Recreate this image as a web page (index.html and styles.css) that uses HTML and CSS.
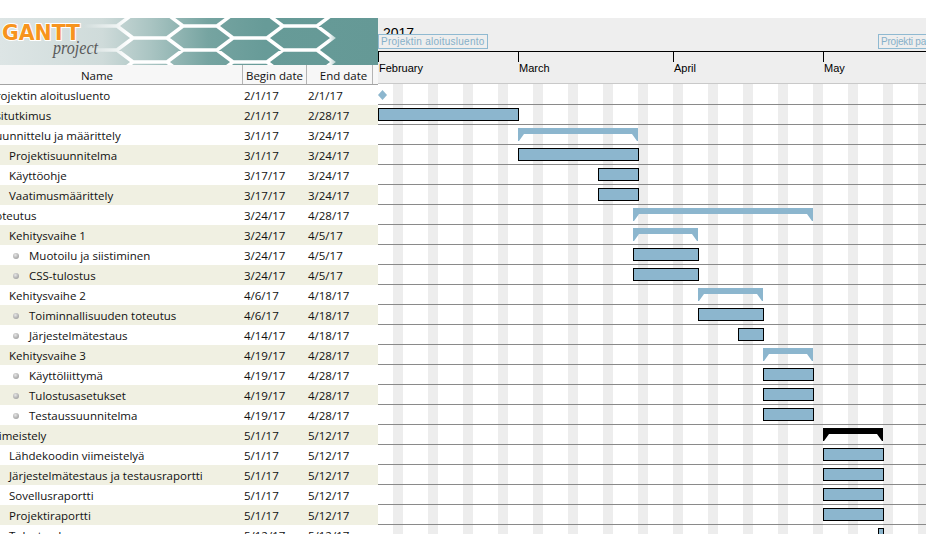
FILE: index.html
```html
<!DOCTYPE html>
<html>
<head>
<meta charset="utf-8">
<title>GanttProject</title>
<link rel="stylesheet" href="styles.css">
</head>
<body>
<div class="topgap"></div>
<div class="main">
  <div class="tree">
    <div class="banner">
      <svg width="378" height="47" viewBox="0 0 378 47">
        <defs>
          <linearGradient id="bg" x1="0" y1="0" x2="1" y2="0">
            <stop offset="0" stop-color="#dde5e5"/>
            <stop offset="0.27" stop-color="#cfdbda"/>
            <stop offset="0.40" stop-color="#a9c4c2"/>
            <stop offset="0.55" stop-color="#76a4a1"/>
            <stop offset="0.70" stop-color="#679b98"/>
            <stop offset="1" stop-color="#659996"/>
          </linearGradient>
          <linearGradient id="fade" x1="0" y1="0" x2="378" y2="0" gradientUnits="userSpaceOnUse">
            <stop offset="0.22" stop-color="#fff" stop-opacity="0"/>
            <stop offset="0.34" stop-color="#fff" stop-opacity="1"/>
            <stop offset="0.87" stop-color="#fff" stop-opacity="1"/>
            <stop offset="0.91" stop-color="#fff" stop-opacity="0"/>
          </linearGradient>
          <mask id="hexmask">
            <rect x="0" y="0" width="378" height="47" fill="url(#fade)"/>
          </mask>
        </defs>
        <rect x="0" y="0" width="378" height="47" fill="url(#bg)"/>
        <g mask="url(#hexmask)" fill="none" stroke="#ffffff" stroke-width="3.5" stroke-linejoin="miter">
          <path d="M67 20l16-12h34l16 12-16 12h-34z M67 44l16-12h34l16 12-16 12h-34z M67 -4l16-12h34l16 12-16 12h-34z
                   M117 8l16-12h34l16 12-16 12h-34z M117 32l16-12h34l16 12-16 12h-34z M117 56l16-12h34l16 12-16 12h-34z
                   M167 20l16-12h34l16 12-16 12h-34z M167 44l16-12h34l16 12-16 12h-34z M167 -4l16-12h34l16 12-16 12h-34z
                   M217 8l16-12h34l16 12-16 12h-34z M217 32l16-12h34l16 12-16 12h-34z M217 56l16-12h34l16 12-16 12h-34z
                   M267 20l16-12h34l16 12-16 12h-34z M267 44l16-12h34l16 12-16 12h-34z M267 -4l16-12h34l16 12-16 12h-34z"/>
        </g>
        <text x="2" y="22" class="logo-gantt" textLength="78" lengthAdjust="spacingAndGlyphs">GANTT</text>
        <text x="53" y="36" class="logo-project" textLength="45" lengthAdjust="spacingAndGlyphs">project</text>
      </svg>
    </div>
    <div class="thead">
      <div class="th th-name">Name</div>
      <div class="th th-begin">Begin date</div>
      <div class="th th-end">End date</div>
      <div class="th th-fill"></div>
    </div>
    <div class="trows">
      <div class="trow"><div class="c-name l1"><span class="txt">Projektin aloitusluento</span></div><div class="c-begin">2/1/17</div><div class="c-end">2/1/17</div></div>
      <div class="trow"><div class="c-name l1"><span class="txt">Esitutkimus</span></div><div class="c-begin">2/1/17</div><div class="c-end">2/28/17</div></div>
      <div class="trow"><div class="c-name l1"><span class="txt">Suunnittelu ja määrittely</span></div><div class="c-begin">3/1/17</div><div class="c-end">3/24/17</div></div>
      <div class="trow"><div class="c-name l2"><span class="txt">Projektisuunnitelma</span></div><div class="c-begin">3/1/17</div><div class="c-end">3/24/17</div></div>
      <div class="trow"><div class="c-name l2"><span class="txt">Käyttöohje</span></div><div class="c-begin">3/17/17</div><div class="c-end">3/24/17</div></div>
      <div class="trow"><div class="c-name l2"><span class="txt">Vaatimusmäärittely</span></div><div class="c-begin">3/17/17</div><div class="c-end">3/24/17</div></div>
      <div class="trow"><div class="c-name l1"><span class="txt">Toteutus</span></div><div class="c-begin">3/24/17</div><div class="c-end">4/28/17</div></div>
      <div class="trow"><div class="c-name l2"><span class="txt">Kehitysvaihe 1</span></div><div class="c-begin">3/24/17</div><div class="c-end">4/5/17</div></div>
      <div class="trow"><div class="c-name l3"><span class="dot"></span><span class="txt">Muotoilu ja siistiminen</span></div><div class="c-begin">3/24/17</div><div class="c-end">4/5/17</div></div>
      <div class="trow"><div class="c-name l3"><span class="dot"></span><span class="txt">CSS-tulostus</span></div><div class="c-begin">3/24/17</div><div class="c-end">4/5/17</div></div>
      <div class="trow"><div class="c-name l2"><span class="txt">Kehitysvaihe 2</span></div><div class="c-begin">4/6/17</div><div class="c-end">4/18/17</div></div>
      <div class="trow"><div class="c-name l3"><span class="dot"></span><span class="txt">Toiminnallisuuden toteutus</span></div><div class="c-begin">4/6/17</div><div class="c-end">4/18/17</div></div>
      <div class="trow"><div class="c-name l3"><span class="dot"></span><span class="txt">Järjestelmätestaus</span></div><div class="c-begin">4/14/17</div><div class="c-end">4/18/17</div></div>
      <div class="trow"><div class="c-name l2"><span class="txt">Kehitysvaihe 3</span></div><div class="c-begin">4/19/17</div><div class="c-end">4/28/17</div></div>
      <div class="trow"><div class="c-name l3"><span class="dot"></span><span class="txt">Käyttöliittymä</span></div><div class="c-begin">4/19/17</div><div class="c-end">4/28/17</div></div>
      <div class="trow"><div class="c-name l3"><span class="dot"></span><span class="txt">Tulostusasetukset</span></div><div class="c-begin">4/19/17</div><div class="c-end">4/28/17</div></div>
      <div class="trow"><div class="c-name l3"><span class="dot"></span><span class="txt">Testaussuunnitelma</span></div><div class="c-begin">4/19/17</div><div class="c-end">4/28/17</div></div>
      <div class="trow"><div class="c-name l1"><span class="txt">Viimeistely</span></div><div class="c-begin">5/1/17</div><div class="c-end">5/12/17</div></div>
      <div class="trow"><div class="c-name l2"><span class="txt">Lähdekoodin viimeistelyä</span></div><div class="c-begin">5/1/17</div><div class="c-end">5/12/17</div></div>
      <div class="trow"><div class="c-name l2"><span class="txt">Järjestelmätestaus ja testausraportti</span></div><div class="c-begin">5/1/17</div><div class="c-end">5/12/17</div></div>
      <div class="trow"><div class="c-name l2"><span class="txt">Sovellusraportti</span></div><div class="c-begin">5/1/17</div><div class="c-end">5/12/17</div></div>
      <div class="trow"><div class="c-name l2"><span class="txt">Projektiraportti</span></div><div class="c-begin">5/1/17</div><div class="c-end">5/12/17</div></div>
      <div class="trow"><div class="c-name l2"><span class="txt">Tulostusdemo</span></div><div class="c-begin">5/12/17</div><div class="c-end">5/12/17</div></div>
    </div>
  </div>
  <div class="chart">
    <div class="chead">
      <div class="year"><span>2017</span></div>
      <div class="months">
        <div class="month" style="width:140px"><div class="tick"></div><div class="mlabel">February</div></div>
        <div class="month" style="width:155px"><div class="tick"></div><div class="mlabel">March</div></div>
        <div class="month" style="width:150px"><div class="tick"></div><div class="mlabel">April</div></div>
        <div class="month" style="width:155px"><div class="tick"></div><div class="mlabel">May</div></div>
      </div>
      <div class="tl" style="left:0px">Projektin aloitusluento</div>
      <div class="tl tl-tight" style="left:500px">Projekti palautus</div>
    </div>
    <div class="cbody">
      <div class="crow"><div class="ms" style="margin-left:0px"></div></div>
      <div class="crow"><div class="bar" style="margin-left:0px;width:141px"></div></div>
      <div class="crow"><div class="sum" style="margin-left:140px;width:120px"></div></div>
      <div class="crow"><div class="bar" style="margin-left:140px;width:121px"></div></div>
      <div class="crow"><div class="bar" style="margin-left:220px;width:41px"></div></div>
      <div class="crow"><div class="bar" style="margin-left:220px;width:41px"></div></div>
      <div class="crow"><div class="sum" style="margin-left:255px;width:180px"></div></div>
      <div class="crow"><div class="sum" style="margin-left:255px;width:65px"></div></div>
      <div class="crow"><div class="bar" style="margin-left:255px;width:66px"></div></div>
      <div class="crow"><div class="bar" style="margin-left:255px;width:66px"></div></div>
      <div class="crow"><div class="sum" style="margin-left:320px;width:65px"></div></div>
      <div class="crow"><div class="bar" style="margin-left:320px;width:66px"></div></div>
      <div class="crow"><div class="bar" style="margin-left:360px;width:26px"></div></div>
      <div class="crow"><div class="sum" style="margin-left:385px;width:50px"></div></div>
      <div class="crow"><div class="bar" style="margin-left:385px;width:51px"></div></div>
      <div class="crow"><div class="bar" style="margin-left:385px;width:51px"></div></div>
      <div class="crow"><div class="bar" style="margin-left:385px;width:51px"></div></div>
      <div class="crow"><div class="sum sum-black" style="margin-left:445px;width:60px"></div></div>
      <div class="crow"><div class="bar" style="margin-left:445px;width:61px"></div></div>
      <div class="crow"><div class="bar" style="margin-left:445px;width:61px"></div></div>
      <div class="crow"><div class="bar" style="margin-left:445px;width:61px"></div></div>
      <div class="crow"><div class="bar" style="margin-left:445px;width:61px"></div></div>
      <div class="crow"><div class="bar" style="margin-left:500px;width:6px"></div></div>
    </div>
  </div>
</div>
</body>
</html>
```
FILE: styles.css
```css
html, body {
  margin: 0;
  padding: 0;
}
body {
  width: 926px;
  height: 534px;
  overflow: hidden;
  background: #ffffff;
  font-family: "Open Sans", "Noto Sans", sans-serif;
  color: #111;
}
.topgap {
  height: 18px;
}
.main {
  display: flex;
  height: 516px;
}

/* ---------- tree / table ---------- */
.tree {
  width: 378px;
  flex: none;
  display: flex;
  flex-direction: column;
  overflow: hidden;
}
.banner {
  height: 47px;
  flex: none;
}
.banner svg {
  display: block;
}
.logo-gantt {
  font-family: "DejaVu Sans", sans-serif;
  font-weight: bold;
  font-size: 22px;
  fill: #f7941d;
  stroke: #ffffff;
  stroke-width: 2px;
  paint-order: stroke;
}
.logo-project {
  font-family: "Liberation Serif", serif;
  font-style: italic;
  font-size: 18px;
  fill: #5a5a5a;
}
.thead {
  display: flex;
  flex: none;
  height: 20px;
  box-sizing: border-box;
  border-bottom: 1px solid #a3a3a3;
  background: #f7f7f7;
  font-size: 11.5px;
  line-height: 21px;
  color: #111;
}
.th {
  box-sizing: border-box;
  height: 19px;
  border-right: 1px solid #b4b4b4;
  text-align: center;
  white-space: nowrap;
  overflow: hidden;
}
.th-name {
  width: 243px;
  padding-right: 48px;
}
.th-begin {
  width: 64px;
}
.th-end {
  width: 66px;
  padding-left: 8px;
}
.th-fill {
  flex: 1;
  border-right: none;
}
.trows {
  display: flex;
  flex-direction: column;
}
.trow {
  display: flex;
  height: 20px;
  flex: none;
  font-size: 11.5px;
  line-height: 22px;
  white-space: nowrap;
}
.trow:nth-child(even) {
  background: #f0f0e2;
}
.c-name {
  width: 243px;
  height: 20px;
  flex: none;
  overflow: hidden;
  display: flex;
  align-items: flex-start;
}
.c-name.l1 .txt {
  margin-left: -11px;
}
.c-name.l2 {
  padding-left: 9px;
  box-sizing: border-box;
}
.c-name.l3 {
  padding-left: 13px;
  box-sizing: border-box;
}
.dot {
  width: 6px;
  height: 6px;
  margin-top: 8px;
  border-radius: 50%;
  background: radial-gradient(circle at 40% 35%, #e6e6e6 0, #b3b3b3 55%, #929292 100%);
  margin-right: 10px;
  flex: none;
}
.c-begin {
  width: 64px;
  height: 20px;
  flex: none;
  padding-left: 1px;
  box-sizing: border-box;
}
.c-end {
  flex: 1;
  height: 20px;
  padding-left: 1px;
}

/* ---------- chart ---------- */
.chart {
  flex: 1;
  display: flex;
  flex-direction: column;
  position: relative;
  overflow: hidden;
  min-width: 0;
}
.chead {
  height: 66px;
  flex: none;
  box-sizing: border-box;
  background: #eeeeee;
  border-bottom: 1px solid #c9c9c9;
  position: relative;
  font-family: "Liberation Sans", Arial, sans-serif;
  color: #000;
}
.year {
  height: 34px;
  box-sizing: border-box;
  border-bottom: 1px solid #000;
  padding: 7px 0 0 5px;
  font-size: 14px;
  line-height: 16px;
  overflow: hidden;
}
.months {
  display: flex;
  height: 31px;
}
.month {
  flex: none;
  display: flex;
  flex-direction: column;
}
.tick {
  width: 1px;
  height: 10px;
  background: #000;
}
.mlabel {
  font-size: 11px;
  line-height: 10px;
  margin-top: 1px;
  padding-left: 1px;
  white-space: nowrap;
}
.tl {
  position: absolute;
  top: 16px;
  height: 15px;
  box-sizing: border-box;
  border: 1px solid #8fb9d1;
  background: #eeeeee;
  color: #86b0c9;
  font-size: 10px;
  line-height: 13px;
  padding: 0 0 0 2px;
  letter-spacing: 0.25px;
  white-space: nowrap;
  width: 110px;
  overflow: hidden;
}
.tl-tight {
  letter-spacing: -0.2px;
}
.cbody {
  flex: 1;
  padding-top: 1px;
  background: repeating-linear-gradient(to right,
    transparent 0, transparent 15px,
    #ededed 15px, #ededed 25px,
    transparent 25px, transparent 35px);
}
.crow {
  height: 20px;
  box-sizing: border-box;
  border-bottom: 1px solid #8a8a8a;
  display: flex;
  align-items: flex-start;
}
.bar {
  flex: none;
  margin-top: 3px;
  height: 13px;
  box-sizing: border-box;
  border: 1px solid #000;
  background: #8cb6ce;
}
.sum {
  flex: none;
  margin-top: 3px;
  height: 13px;
  background: #8cb6ce;
  clip-path: polygon(0 0, 100% 0, 100% 100%, calc(100% - 1px) 100%, calc(100% - 6px) 6px, 6px 6px, 1px 100%, 0 100%);
}
.sum-black {
  background: #000;
}
.ms {
  flex: none;
  margin-top: 5px;
  width: 9px;
  height: 10px;
  background: #8cb6ce;
  clip-path: polygon(50% 0, 100% 50%, 50% 100%, 0 50%);
}
```
